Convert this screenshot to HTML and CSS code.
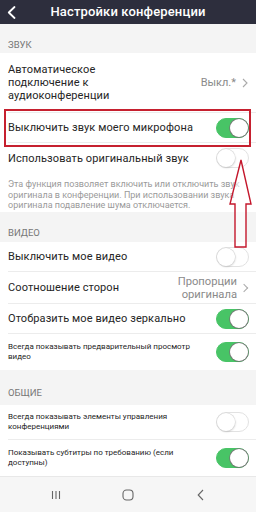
FILE: index.html
```html
<!DOCTYPE html>
<html lang="ru">
<head>
<meta charset="utf-8">
<title>Настройки конференции</title>
<link rel="stylesheet" href="styles.css">
</head>
<body>
<div class="screen">
  <header class="top">
    <span class="back"><svg width="9" height="13" viewBox="0 0 9 13"><path d="M7.5 1 L1.8 6.5 L7.5 12" fill="none" stroke="#fff" stroke-width="1.8" stroke-linecap="round" stroke-linejoin="round"/></svg></span>
    <h1 class="title">Настройки конференции</h1>
    <span></span>
  </header>

  <div class="sec sec1"><span>ЗВУК</span></div>
  <div class="group">
    <div class="row tall">
      <span class="label">Автоматическое<br>подключение к<br>аудиоконференции</span>
      <span class="value">Выкл.*<svg class="chev" width="6" height="10" viewBox="0 0 6 10"><path d="M1 1 L5 5 L1 9" fill="none" stroke="#aaa" stroke-width="1.1"/></svg></span>
    </div>
    <div class="row mic">
      <span class="label">Выключить звук моего микрофона</span>
      <span class="toggle on"></span>
      <span class="mark"></span>
    </div>
    <div class="row plain">
      <span class="label">Использовать оригинальный звук</span>
      <span class="toggle"></span>
    </div>
    <p class="desc">Эта функция позволяет включить или отключить звук оригинала в конференции. При использовании звука оригинала подавление шума отключается.</p>
  </div>

  <div class="sec sec2"><span>ВИДЕО</span></div>
  <div class="group">
    <div class="row">
      <span class="label">Выключить мое видео</span>
      <span class="toggle"></span>
    </div>
    <div class="row r32">
      <span class="label">Соотношение сторон</span>
      <span class="value two">Пропорции<br>оригинала</span>
    </div>
    <div class="row">
      <span class="label">Отобразить мое видео зеркально</span>
      <span class="toggle on"></span>
    </div>
    <div class="row r36 small plain">
      <span class="label">Всегда показывать предварительный просмотр<br>видео</span>
      <span class="toggle on"></span>
    </div>
  </div>

  <div class="sec sec3"><span>ОБЩИЕ</span></div>
  <div class="group">
    <div class="row r35 small">
      <span class="label">Всегда показывать элементы управления<br>конференциями</span>
      <span class="toggle"></span>
    </div>
    <div class="row r36 small plain">
      <span class="label">Показывать субтитры по требованию (если<br>доступны)</span>
      <span class="toggle on"></span>
    </div>
  </div>

  <nav class="nav">
    <svg width="10" height="10" viewBox="0 0 10 10"><path d="M1.5 1 V9 M5 1 V9 M8.5 1 V9" stroke="#666" stroke-width="1.1"/></svg>
    <svg width="12" height="12" viewBox="0 0 12 12"><rect x="1" y="1" width="10" height="10" rx="3.5" fill="none" stroke="#666" stroke-width="1.1"/></svg>
    <svg width="7" height="12" viewBox="0 0 7 12"><path d="M6 1 L1.2 6 L6 11" fill="none" stroke="#666" stroke-width="1.1"/></svg>
  </nav>

  <svg class="arrow" width="26" height="90" viewBox="0 0 26 90"><polygon points="13,1 23,45 18,45 18,88 7,88 7,45 2,45" fill="rgba(255,255,255,0.55)" stroke="#c4172c" stroke-width="1.4" stroke-linejoin="miter"/></svg>
</div>
</body>
</html>
```

FILE: styles.css
```css
* { box-sizing: border-box; }
html, body { margin: 0; padding: 0; }
body {
  font-family: Roboto, "Noto Sans", "Liberation Sans", sans-serif;
  background: #f4f4f4;
  color: #222;
}
.screen {
  position: relative;
  width: 256px;
  height: 512px;
  overflow: hidden;
  display: flex;
  flex-direction: column;
  background: #f4f4f4;
}
.top {
  height: 24px;
  flex: none;
  background: #2d2e3d;
  display: grid;
  grid-template-columns: 30px 1fr 30px;
  align-items: center;
}
.back { display: flex; padding-left: 7px; }
.title {
  margin: 0;
  text-align: center;
  color: #fff;
  font-size: 13px;
  font-weight: 500;
  line-height: 24px;
  letter-spacing: 0.15px;
}
.sec {
  flex: none;
  display: flex;
  align-items: flex-end;
  padding: 0 8px;
  font-size: 9.5px;
  line-height: 10px;
  color: #777;
}
.sec1 { height: 29px; padding-bottom: 3px; }
.sec2 { height: 30px; padding-bottom: 4px; }
.sec3 { height: 35px; padding-bottom: 7px; }
.group { background: #fff; flex: none; }
.row {
  position: relative;
  height: 30px;
  margin-left: 8px;
  padding-right: 7px;
  display: flex;
  align-items: center;
  justify-content: space-between;
  border-bottom: 1px solid #ececec;
}
.row.plain { border-bottom: none; }
.row.tall { height: 60px; }
.row.r32 { height: 32px; }
.row.r35 { height: 35px; }
.row.r36 { height: 36px; }
.label { font-size: 11px; line-height: 13px; color: #252525; letter-spacing: 0.1px; }
.small .label { font-size: 8px; line-height: 10px; letter-spacing: 0; }
.value {
  display: flex;
  align-items: center;
  gap: 6px;
  font-size: 11px;
  color: #8a8a8a;
  padding-right: 1px;
}
.value.two {
  display: block;
  text-align: right;
  line-height: 13px;
  font-size: 11.2px;
  position: relative;
  padding-right: 12px;
}
.value.two::after {
  content: "";
  position: absolute;
  right: 2px;
  top: 10px;
  width: 5px;
  height: 5px;
  border-top: 1.1px solid #aaa;
  border-right: 1.1px solid #aaa;
  transform: rotate(45deg);
}
.chev { display: block; }
.toggle {
  position: relative;
  flex: none;
  width: 33px;
  height: 20px;
  border-radius: 10px;
  background: #fff;
  border: 1px solid #e2e2e2;
}
.toggle::after {
  content: "";
  position: absolute;
  top: 0;
  left: 0;
  width: 18px;
  height: 18px;
  border-radius: 50%;
  background: #fff;
  box-shadow: 0 0 0 0.5px #d8d8d8, 0.5px 1px 2px rgba(0,0,0,0.18);
}
.toggle.on {
  background: #48c466;
  border-color: #48c466;
}
.toggle.on::after {
  left: auto;
  right: 0;
  box-shadow: 0 0 0 0.8px #777, 0 1px 1px rgba(0,0,0,0.2);
}
.mark {
  position: absolute;
  top: -4px;
  bottom: -5px;
  left: -4px;
  right: 5px;
  border: 2px solid #c6202f;
  pointer-events: none;
}
.desc {
  margin: 0;
  padding: 6px 6px 7px 8px;
  height: 39px;
  font-size: 9px;
  line-height: 10.5px;
  color: #9a9a9a;
}
.nav {
  margin-top: auto;
  height: 36px;
  flex: none;
  background: #f6f6f6;
  border-top: 1px solid #e8e8e8;
  display: grid;
  grid-template-columns: 1fr 1fr 1fr;
  justify-items: center;
  align-items: center;
  padding: 0 20px;
}
.arrow {
  position: absolute;
  left: 228px;
  top: 159px;
}
```
